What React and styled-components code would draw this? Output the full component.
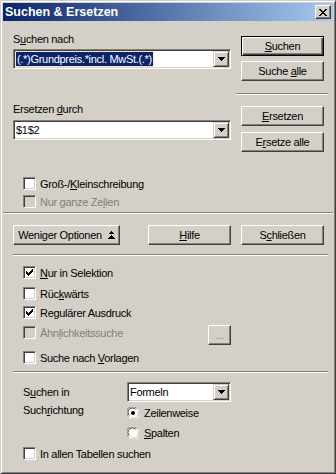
import React from 'react'
import styled, { createGlobalStyle } from 'styled-components'

const GlobalStyle = createGlobalStyle`
  html, body { margin: 0; padding: 0; background: #D4D0C8; }
  body { font-family: "Liberation Sans", Arial, sans-serif; font-size: 11px; }
`

const FACE = '#D4D0C8'
const SHADOW = '#808080'
const DARK = '#404040'

const Window = styled.div`
  width: 336px;
  height: 474px;
  box-sizing: border-box;
  background: ${FACE};
  border: 1px solid;
  border-color: ${FACE} ${DARK} ${DARK} ${FACE};
  box-shadow: inset 1px 1px 0 #fff, inset -1px -1px 0 ${SHADOW};
  padding: 2px;
  display: flex;
  flex-direction: column;
  font-family: "Liberation Sans", Arial, sans-serif;
  font-size: 11px;
  letter-spacing: -0.3px;
  color: #000;
`

const TitleBar = styled.div`
  height: 18px;
  display: flex;
  align-items: center;
  padding: 0 2px;
  background: linear-gradient(to right, #0A246A, #A6CAF0);
`

const Title = styled.div`
  flex: 1;
  color: #fff;
  font-weight: bold;
  font-size: 12.5px;
  letter-spacing: 0;
  line-height: 18px;
`

const CloseButton = styled.div`
  width: 16px;
  height: 14px;
  box-sizing: border-box;
  background: ${FACE};
  border: 1px solid;
  border-color: #fff ${DARK} ${DARK} #fff;
  box-shadow: inset -1px -1px 0 ${SHADOW};
  display: flex;
  align-items: center;
  justify-content: center;
`

const Body = styled.div`
  flex: 1;
  padding: 0 9px 0 10px;
  display: flex;
  flex-direction: column;
`

const TopSection = styled.div`
  display: grid;
  grid-template-columns: 218px 83px;
  column-gap: 10px;
  padding: 12px 0 4px;
`

const LeftCol = styled.div`
  display: flex;
  flex-direction: column;
`

const RightCol = styled.div`
  display: flex;
  flex-direction: column;
  padding-top: 3px;
`

const Label = styled.div`
  height: 13px;
  line-height: 13px;
  margin-top: ${p => p.$top || 0}px;
  margin-bottom: ${p => p.$bottom || 0}px;
  color: ${p => (p.$disabled ? SHADOW : '#000')};
  white-space: nowrap;
`

const ComboBox = styled.div`
  width: ${p => p.$w}px;
  height: 20px;
  box-sizing: border-box;
  background: #fff;
  border: 1px solid;
  border-color: ${SHADOW} #fff #fff ${SHADOW};
  box-shadow: inset 1px 1px 0 ${DARK}, inset -1px -1px 0 ${FACE};
  padding: 1px;
  display: flex;
`

const ComboText = styled.div`
  flex: 1;
  display: flex;
  align-items: center;
  padding-left: 1px;
  overflow: hidden;
`

const Selected = styled.span`
  background: #0A246A;
  color: #fff;
  line-height: 14px;
  padding: 0 1px;
  outline: 1px dotted #F5D88C;
  outline-offset: 0;
`

const DropButton = styled.div`
  width: 16px;
  height: 16px;
  box-sizing: border-box;
  background: ${FACE};
  border: 1px solid;
  border-color: ${FACE} ${DARK} ${DARK} ${FACE};
  box-shadow: inset 1px 1px 0 #fff, inset -1px -1px 0 ${SHADOW};
  display: flex;
  align-items: center;
  justify-content: center;
`

const Button = styled.div`
  width: ${p => p.$w || 83}px;
  height: 20px;
  box-sizing: border-box;
  background: ${FACE};
  border: 1px solid;
  border-color: ${p => (p.$default ? '#000' : `#fff ${DARK} ${DARK} #fff`)};
  box-shadow: ${p =>
    p.$default
      ? `inset 1px 1px 0 #fff, inset -1px -1px 0 ${DARK}, inset -2px -2px 0 ${SHADOW}`
      : `inset -1px -1px 0 ${SHADOW}`};
  margin-top: ${p => p.$top || 0}px;
  margin-left: ${p => (p.$auto ? 'auto' : '0')};
  display: flex;
  align-items: center;
  justify-content: center;
  gap: 6px;
  color: ${p => (p.$disabled ? SHADOW : '#000')};
  white-space: nowrap;
`

const Separator = styled.div`
  height: 0;
  border-top: 1px solid ${SHADOW};
  border-bottom: 1px solid #fff;
  margin: ${p => p.$m};
`

const ButtonRow = styled.div`
  display: flex;
  gap: 10px;
  margin-top: 11px;
`

const Options = styled.div`
  display: flex;
  flex-direction: column;
  padding-left: 10px;
`

const CheckRow = styled.div`
  display: flex;
  align-items: center;
  gap: 4px;
  height: 13px;
  margin-top: ${p => p.$top || 0}px;
  color: ${p => (p.$disabled ? SHADOW : '#000')};
  white-space: nowrap;
`

const CheckBox = styled.div`
  width: 13px;
  height: 13px;
  flex: none;
  box-sizing: border-box;
  background: ${p => (p.$disabled ? FACE : '#fff')};
  border: 1px solid;
  border-color: ${SHADOW} #fff #fff ${SHADOW};
  box-shadow: inset 1px 1px 0 ${DARK}, inset -1px -1px 0 ${FACE};
  display: flex;
  align-items: center;
  justify-content: center;
`

const SimilarRow = styled.div`
  display: flex;
  align-items: flex-start;
  justify-content: space-between;
  width: 208px;
  margin-top: ${p => p.$top || 0}px;
`

const FormGrid = styled.div`
  display: grid;
  grid-template-columns: 104px auto;
  align-items: center;
  padding-left: 10px;
  margin-top: 9px;
`

const RadioRow = styled.div`
  display: flex;
  align-items: center;
  gap: 5px;
  height: 12px;
  margin-top: ${p => p.$top || 0}px;
`

const U = styled.span`
  text-decoration: underline;
`

const Check = () => (
  <svg width="7" height="7" viewBox="0 0 7 7" shapeRendering="crispEdges">
    <path
      fill="#000"
      d="M6 0h1v1h-1z M5 1h2v1h-2z M0 2h1v1h-1z M4 2h3v1h-3z M0 3h2v1h-2z M3 3h3v1h-3z M0 4h5v1h-5z M1 5h3v1h-3z M2 6h1v1h-1z"
    />
  </svg>
)

const Arrow = () => (
  <svg width="7" height="4" viewBox="0 0 7 4" shapeRendering="crispEdges">
    <path fill="#000" d="M0 0h7v1h-7z M1 1h5v1h-5z M2 2h3v1h-3z M3 3h1v1h-1z" />
  </svg>
)

const DoubleUp = () => (
  <svg width="7" height="8" viewBox="0 0 7 8" shapeRendering="crispEdges">
    <path
      fill="#000"
      d="M3 0h1v1h-1z M2 1h3v1h-3z M1 2h5v1h-5z M3 4h1v1h-1z M2 5h3v1h-3z M1 6h5v1h-5z M0 7h7v1h-7z"
    />
  </svg>
)

const CloseX = () => (
  <svg width="8" height="7" viewBox="0 0 8 7" shapeRendering="crispEdges">
    <path
      fill="#000"
      d="M0 0h2v1h-2z M6 0h2v1h-2z M1 1h2v1h-2z M5 1h2v1h-2z M2 2h4v1h-4z M3 3h2v1h-2z M2 4h4v1h-4z M1 5h2v1h-2z M5 5h2v1h-2z M0 6h2v1h-2z M6 6h2v1h-2z"
    />
  </svg>
)

const Radio = ({ checked }) => (
  <svg width="12" height="12" viewBox="0 0 12 12">
    <circle cx="6" cy="6" r="5.5" fill="#fff" />
    <path d="M1.2 9.5 A5.5 5.5 0 0 1 9.5 1.2" fill="none" stroke={SHADOW} strokeWidth="1" />
    <path d="M2.3 8.6 A4.3 4.3 0 0 1 8.6 2.3" fill="none" stroke={DARK} strokeWidth="1" />
    <path d="M10.8 2.5 A5.5 5.5 0 0 1 2.5 10.8" fill="none" stroke="#fff" strokeWidth="1" />
    <path d="M9.7 3.4 A4.3 4.3 0 0 1 3.4 9.7" fill="none" stroke={FACE} strokeWidth="1" />
    {checked && <circle cx="6" cy="6" r="2" fill="#000" />}
  </svg>
)

const Option = ({ checked, disabled, top, children }) => (
  <CheckRow $top={top} $disabled={disabled}>
    <CheckBox $disabled={disabled}>{checked && <Check />}</CheckBox>
    <span>{children}</span>
  </CheckRow>
)

export default function App() {
  return (
    <>
      <GlobalStyle />
      <Window>
        <TitleBar>
          <Title>Suchen &amp; Ersetzen</Title>
          <CloseButton>
            <CloseX />
          </CloseButton>
        </TitleBar>
        <Body>
          <TopSection>
            <LeftCol>
              <Label $bottom={3}>
                S<U>u</U>chen nach
              </Label>
              <ComboBox $w={218}>
                <ComboText>
                  <Selected>(.*)Grundpreis.*incl. MwSt.(.*)</Selected>
                </ComboText>
                <DropButton>
                  <Arrow />
                </DropButton>
              </ComboBox>
              <Label $top={34} $bottom={4}>
                Ersetzen <U>d</U>urch
              </Label>
              <ComboBox $w={218}>
                <ComboText>$1$2</ComboText>
                <DropButton>
                  <Arrow />
                </DropButton>
              </ComboBox>
              <Options>
                <Option top={37}>
                  Groß-/<U>K</U>leinschreibung
                </Option>
                <Option top={5} disabled>
                  Nur ganze Ze<U>l</U>len
                </Option>
              </Options>
            </LeftCol>
            <RightCol>
              <Button $default>
                <span>
                  <U>S</U>uchen
                </span>
              </Button>
              <Button $top={5}>
                <span>
                  Suche <U>a</U>lle
                </span>
              </Button>
              <Separator $m="12px -4px 0 -5px" />
              <Button $top={11}>
                <span>
                  <U>E</U>rsetzen
                </span>
              </Button>
              <Button $top={6}>
                <span>
                  E<U>r</U>setze alle
                </span>
              </Button>
            </RightCol>
          </TopSection>
          <Separator $m="0 -9px 0 -10px" />
          <ButtonRow>
            <Button $w={107}>
              <span>Weniger Optionen</span>
              <DoubleUp />
            </Button>
            <Button $auto>
              <span>
                <U>H</U>ilfe
              </span>
            </Button>
            <Button>
              <span>
                S<U>c</U>hließen
              </span>
            </Button>
          </ButtonRow>
          <Separator $m="9px -4px 0 0" />
          <Options>
            <Option checked top={10}>
              <U>N</U>ur in Selektion
            </Option>
            <Option top={8}>
              Rüc<U>k</U>wärts
            </Option>
            <Option checked top={6}>
              Regulärer Ausdruck
            </Option>
            <SimilarRow $top={6}>
              <Option disabled top={1}>
                Ähn<U>l</U>ichkeitssuche
              </Option>
              <Button $w={23} $disabled>
                <span>...</span>
              </Button>
            </SimilarRow>
            <Option top={6}>
              Suche nach <U>V</U>orlagen
            </Option>
          </Options>
          <Separator $m="7px -4px 0 0" />
          <FormGrid>
            <Label>
              S<U>u</U>chen in
            </Label>
            <ComboBox $w={104}>
              <ComboText>Formeln</ComboText>
              <DropButton>
                <Arrow />
              </DropButton>
            </ComboBox>
            <Label>
              Such<U>r</U>ichtung
            </Label>
            <RadioRow $top={5}>
              <Radio checked />
              <span>Zeilenweise</span>
            </RadioRow>
            <span />
            <RadioRow $top={8}>
              <Radio />
              <span>
                <U>S</U>palten
              </span>
            </RadioRow>
          </FormGrid>
          <Options>
            <Option top={8}>In allen Tabellen suchen</Option>
          </Options>
        </Body>
      </Window>
    </>
  )
}
